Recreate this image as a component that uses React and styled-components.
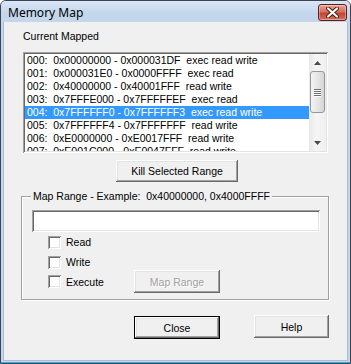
import React from "react";
import styled, { createGlobalStyle } from "styled-components";

const GlobalStyle = createGlobalStyle`
  html, body { margin: 0; padding: 0; background: #fff; }
  * { box-sizing: border-box; }
`;

const mappings = [
  { id: "000", from: "0x00000000", to: "0x000031DF", flags: "exec read write" },
  { id: "001", from: "0x000031E0", to: "0x0000FFFF", flags: "exec read" },
  { id: "002", from: "0x40000000", to: "0x40001FFF", flags: "read write" },
  { id: "003", from: "0x7FFFE000", to: "0x7FFFFFEF", flags: "exec read" },
  { id: "004", from: "0x7FFFFFF0", to: "0x7FFFFFF3", flags: "exec read write" },
  { id: "005", from: "0x7FFFFFF4", to: "0x7FFFFFFF", flags: "read write" },
  { id: "006", from: "0xE0000000", to: "0xE0017FFF", flags: "read write" },
  { id: "007", from: "0xE001C000", to: "0xE0047FFF", flags: "read write" },
];

const sunken = `
  box-shadow: inset 1px 1px #a0a0a0, inset -1px -1px #ffffff,
    inset 2px 2px #696969, inset -2px -2px #e3e3e3;
`;

const Window = styled.div`
  width: 351px;
  height: 364px;
  display: flex;
  flex-direction: column;
  background: #c3d6ec;
  border: 1px solid #3d4350;
  border-radius: 6px 6px 0 0;
  box-shadow: inset 0 -1px 0 #2ab4e3;
  overflow: hidden;
  font-family: "Liberation Sans", Arial, sans-serif;
  font-size: 10.5px;
  color: #000;
`;

const TitleBar = styled.div`
  height: 21px;
  flex: none;
  display: flex;
  justify-content: space-between;
  padding: 0 3px 0 7px;
  background: linear-gradient(#d9e6f6, #c3d6ec 60%);
`;

const Title = styled.span`
  font-family: "Noto Sans", "Open Sans", sans-serif;
  font-size: 12px;
  line-height: 21px;
  padding-top: 1px;
`;

const CloseBox = styled.div`
  width: 29px;
  height: 17px;
  margin-top: 3px;
  border: 1px solid #5b1d1d;
  border-radius: 3px;
  background: linear-gradient(#e8a393, #d66f5f 45%, #c14532 55%, #d3705a);
  box-shadow: inset 0 0 0 1px rgba(255, 255, 255, 0.35);
  display: flex;
  align-items: center;
  justify-content: center;
`;

const Body = styled.div`
  flex: 1;
  margin: 0 2px 2px;
  background: #f0f0f0;
  border: 1px solid #a9bfd9;
  border-top: none;
  display: flex;
  flex-direction: column;
  align-items: flex-start;
`;

const Label = styled.div`
  margin: 8px 0 0 19px;
  height: 13px;
  line-height: 13px;
`;

const ListBox = styled.div`
  margin: 9px 0 0 19px;
  width: 305px;
  height: 101px;
  padding: 2px;
  background: #fff;
  display: flex;
  ${sunken}
`;

const Rows = styled.div`
  flex: 1;
  overflow: hidden;
`;

const Row = styled.div`
  height: 13px;
  line-height: 13px;
  padding-left: 2px;
  white-space: pre;
  background: ${(p) => (p.$selected ? "#3399ff" : "transparent")};
  color: ${(p) => (p.$selected ? "#fff" : "#000")};
`;

const ScrollBar = styled.div`
  width: 17px;
  display: flex;
  flex-direction: column;
  background: linear-gradient(90deg, #e9e9e9, #f5f5f5 40%, #f0f0f0);
`;

const Arrow = styled.div`
  height: 17px;
  display: flex;
  align-items: center;
  justify-content: center;
`;

const Track = styled.div`
  flex: 1;
  display: flex;
  flex-direction: column;
`;

const Thumb = styled.div`
  height: 42px;
  margin: 0 1px;
  border: 1px solid #979797;
  border-radius: 3px;
  background: linear-gradient(90deg, #f3f3f3, #e6e6e6 50%, #d5d5d5);
  display: flex;
  flex-direction: column;
  align-items: center;
  justify-content: center;
  gap: 1px;
`;

const Grip = styled.div`
  width: 7px;
  height: 1px;
  background: #6f6f6f;
  box-shadow: 0 1px 0 #fdfdfd;
`;

const Button = styled.div`
  width: ${(p) => p.$w}px;
  height: ${(p) => p.$h || 22}px;
  display: flex;
  align-items: center;
  justify-content: center;
  background: #f0f0f0;
  color: ${(p) => (p.$disabled ? "#a0a0a0" : "#000")};
  text-shadow: ${(p) => (p.$disabled ? "1px 1px 0 #fff" : "none")};
  border: 1px solid ${(p) => (p.$default ? "#000" : "transparent")};
  box-shadow: inset -1px -1px #696969, inset 1px 1px #ffffff,
    inset -2px -2px #a0a0a0, inset 2px 2px #e3e3e3;
  ${(p) => !p.$default && "border: none;"}
`;

const KillButton = styled(Button)`
  margin: 7px 0 0 112px;
`;

const Group = styled.fieldset`
  margin: 8px 0 0 17px;
  padding: 0;
  width: 308px;
  min-width: 0;
  border: 1px solid #a0a0a0;
  box-shadow: 1px 1px 0 #fff, inset 1px 1px 0 #fff;
`;

const Legend = styled.legend`
  margin-left: 9px;
  padding: 0 2px;
  height: 13px;
  line-height: 13px;
  background: #f0f0f0;
  white-space: pre;
`;

const GroupInner = styled.div`
  display: flex;
  flex-direction: column;
  padding: 7px 0 6px 10px;
`;

const TextInput = styled.div`
  width: 288px;
  height: 22px;
  background: #fff;
  ${sunken}
`;

const CheckRow = styled.div`
  height: ${(p) => (p.$tall ? 23 : 20)}px;
  margin-top: ${(p) => (p.$tall ? -2 : 0)}px;
  display: flex;
  align-items: center;
  padding-left: 16px;
  &:first-of-type {
    margin-top: 8px;
  }
`;

const CheckBox = styled.div`
  width: 13px;
  height: 13px;
  background: #fff;
  ${sunken}
`;

const CheckLabel = styled.span`
  width: 73px;
  padding-left: 5px;
`;

const Footer = styled.div`
  margin: 15px 0 0 130px;
  display: flex;
  align-items: flex-start;
  gap: 34px;
`;

const CloseButton = styled(Button)`
  margin-top: 1px;
`;

function TriUp() {
  return (
    <svg width="7" height="4" viewBox="0 0 7 4">
      <path d="M3.5 0 L7 4 L0 4 Z" fill="#4a4a4a" />
    </svg>
  );
}

function TriDown() {
  return (
    <svg width="7" height="4" viewBox="0 0 7 4">
      <path d="M0 0 L7 0 L3.5 4 Z" fill="#4a4a4a" />
    </svg>
  );
}

export default function App() {
  return (
    <>
      <GlobalStyle />
      <Window>
        <TitleBar>
          <Title>Memory Map</Title>
          <CloseBox>
            <svg width="13" height="11" viewBox="0 0 13 11">
              <path
                d="M2 1.5 L11 9.5 M11 1.5 L2 9.5"
                stroke="#4a1a14"
                strokeWidth="4"
                strokeLinecap="round"
              />
              <path
                d="M2 1.5 L11 9.5 M11 1.5 L2 9.5"
                stroke="#fff"
                strokeWidth="2.2"
                strokeLinecap="round"
              />
            </svg>
          </CloseBox>
        </TitleBar>
        <Body>
          <Label>Current Mapped</Label>
          <ListBox>
            <Rows>
              {mappings.map((m) => (
                <Row key={m.id} $selected={m.id === "004"}>
                  {`${m.id}:  ${m.from} - ${m.to}  ${m.flags}`}
                </Row>
              ))}
            </Rows>
            <ScrollBar>
              <Arrow>
                <TriUp />
              </Arrow>
              <Track>
                <Thumb>
                  <Grip />
                  <Grip />
                  <Grip />
                  <Grip />
                </Thumb>
              </Track>
              <Arrow>
                <TriDown />
              </Arrow>
            </ScrollBar>
          </ListBox>
          <KillButton $w={122}>Kill Selected Range</KillButton>
          <Group>
            <Legend>Map Range - Example:  0x40000000, 0x4000FFFF</Legend>
            <GroupInner>
              <TextInput />
              <CheckRow>
                <CheckBox />
                <CheckLabel>Read</CheckLabel>
              </CheckRow>
              <CheckRow>
                <CheckBox />
                <CheckLabel>Write</CheckLabel>
              </CheckRow>
              <CheckRow $tall>
                <CheckBox />
                <CheckLabel>Execute</CheckLabel>
                <Button $w={86} $h={23} $disabled>
                  Map Range
                </Button>
              </CheckRow>
            </GroupInner>
          </Group>
          <Footer>
            <CloseButton $w={86} $h={23} $default>
              Close
            </CloseButton>
            <Button $w={75} $h={23}>
              Help
            </Button>
          </Footer>
        </Body>
      </Window>
    </>
  );
}
